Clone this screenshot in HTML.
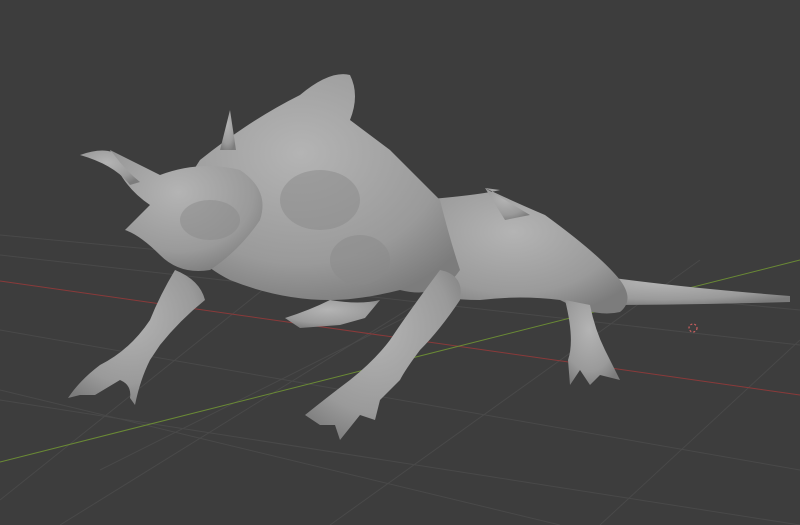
<!DOCTYPE html><html><head><style>html,body{margin:0;padding:0;background:#3d3d3d;width:800px;height:525px;overflow:hidden}</style></head><body>
<svg width="800" height="525" viewBox="0 0 800 525" xmlns="http://www.w3.org/2000/svg">
<defs>
<radialGradient id="g" cx="45%" cy="35%" r="70%"><stop offset="0" stop-color="#b4b4b4"/><stop offset="0.7" stop-color="#9a9a9a"/><stop offset="1" stop-color="#7c7c7c"/></radialGradient>
</defs>
<rect width="800" height="525" fill="#3d3d3d"/>
<g stroke="#494949" stroke-width="1" fill="none">
<line x1="0" y1="330" x2="800" y2="470"/><line x1="0" y1="400" x2="800" y2="525"/><line x1="0" y1="255" x2="800" y2="345"/><line x1="0" y1="235" x2="800" y2="310"/>
<line x1="60" y1="525" x2="520" y2="240"/><line x1="330" y1="525" x2="700" y2="260"/><line x1="600" y1="525" x2="800" y2="340"/><line x1="0" y1="500" x2="300" y2="260"/>
<line x1="0" y1="390" x2="560" y2="525"/><line x1="100" y1="470" x2="560" y2="240"/>
</g>
<line x1="0" y1="281" x2="800" y2="395" stroke="#8a3a3a" stroke-width="1"/>
<line x1="0" y1="462" x2="800" y2="260" stroke="#6a8a35" stroke-width="1"/>
<g fill="url(#g)">
<!-- tail -->
<path d="M560 270 Q650 285 790 296 L790 302 Q680 305 600 305 Z"/>
<!-- hind body -->
<path d="M420 200 Q480 195 500 190 L485 188 Q510 200 545 215 Q600 255 620 280 Q635 300 620 312 Q595 318 560 300 Q520 295 480 300 Q440 300 420 290 Z"/>
<!-- back leg -->
<path d="M565 300 L590 305 Q595 330 605 350 L620 380 L600 375 L590 385 L580 370 L570 385 L568 360 Q575 340 565 300Z"/>
<!-- main body -->
<path d="M200 160 Q250 120 300 95 Q330 70 350 75 Q360 95 350 120 Q370 135 390 150 Q420 180 440 200 Q450 240 460 270 Q440 300 400 290 Q360 300 330 300 Q280 300 230 280 Q190 260 170 220 Q180 190 200 160Z"/>
<!-- head region -->
<path d="M110 150 Q140 165 160 175 Q200 160 240 170 Q270 190 260 220 Q240 250 210 270 Q180 275 160 255 Q140 235 125 230 Q140 215 150 205 Q120 185 110 150Z"/>
<path d="M80 155 Q100 148 112 152 Q125 170 140 182 L130 185 Q115 165 80 155Z"/>
<!-- front-left leg -->
<path d="M175 270 Q200 280 205 300 Q180 320 160 345 L150 360 Q140 380 135 405 L130 398 Q132 385 120 380 L95 395 L80 395 L68 398 Q80 380 100 365 Q130 350 150 320 Q160 295 175 270Z"/>
<!-- front center leg -->
<path d="M440 270 Q465 275 460 300 Q440 330 420 350 Q405 370 400 380 L380 400 L375 420 L360 415 L340 440 L335 425 L320 425 L305 415 Q330 395 350 380 Q375 360 390 340 Q410 310 440 270Z"/>
<!-- arm -->
<path d="M330 300 Q360 305 380 300 L365 318 L340 325 L300 328 L285 318 Q310 310 330 300Z"/>
<!-- spikes -->
<path d="M485 188 L530 215 L505 220 Z"/><path d="M230 110 L236 150 L220 150 Z"/>
</g>
<g fill="#8a8a8a" opacity="0.5">
<ellipse cx="320" cy="200" rx="40" ry="30"/><ellipse cx="360" cy="260" rx="30" ry="25"/><ellipse cx="210" cy="220" rx="30" ry="20"/>
</g>
<circle cx="693" cy="328" r="4" fill="none" stroke="#d06060" stroke-width="1.2" stroke-dasharray="2 2"/>
</svg>
</body></html>
